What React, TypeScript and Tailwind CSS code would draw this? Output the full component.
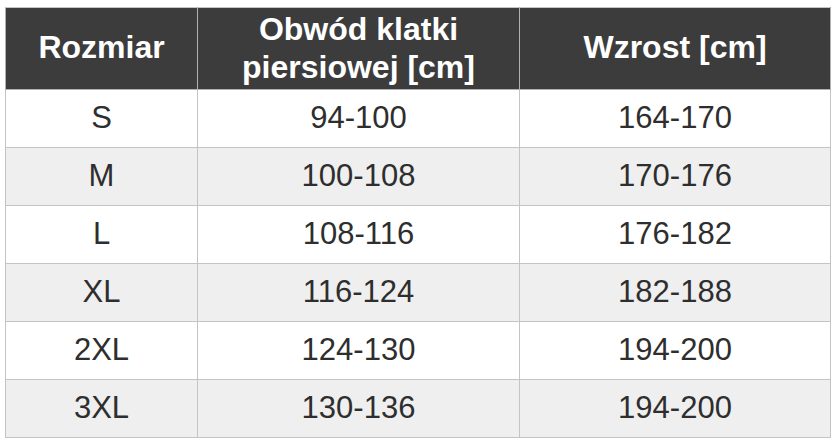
const rows = [
  ['S', '94-100', '164-170'],
  ['M', '100-108', '170-176'],
  ['L', '108-116', '176-182'],
  ['XL', '116-124', '182-188'],
  ['2XL', '124-130', '194-200'],
  ['3XL', '130-136', '194-200'],
];

export default function App() {
  return (
    <div className="h-[445px] w-[836px] bg-white pl-[5px] pt-[7px]" style={{ fontFamily: '"Liberation Sans", Arial, sans-serif' }}>
      <table className="w-[825px] table-fixed border-collapse border border-[#c4c4c4] text-center">
        <colgroup>
          <col className="w-[192px]" />
          <col className="w-[322px]" />
          <col className="w-[311px]" />
        </colgroup>
        <thead>
          <tr className="h-[82px] bg-[#3c3c3c] text-[32px] font-bold leading-[38px] text-white">
            <th className="border border-[#b0b0b0] border-t-[#c4c4c4] pb-[4px]">Rozmiar</th>
            <th className="border border-[#b0b0b0] border-t-[#c4c4c4] pb-[2px]">
              Obwód klatki
              <br />
              piersiowej [cm]
            </th>
            <th className="border border-[#b0b0b0] border-t-[#c4c4c4] pb-[4px]">Wzrost [cm]</th>
          </tr>
        </thead>
        <tbody>
          {rows.map((r, i) => (
            <tr key={r[0]} className={`h-[58px] text-[31px] text-[#2e2e2e] ${i % 2 === 1 ? 'bg-[#efefef]' : 'bg-white'}`}>
              {r.map((c, j) => (
                <td key={j} className="border border-[#c4c4c4]">
                  {c}
                </td>
              ))}
            </tr>
          ))}
        </tbody>
      </table>
    </div>
  );
}
